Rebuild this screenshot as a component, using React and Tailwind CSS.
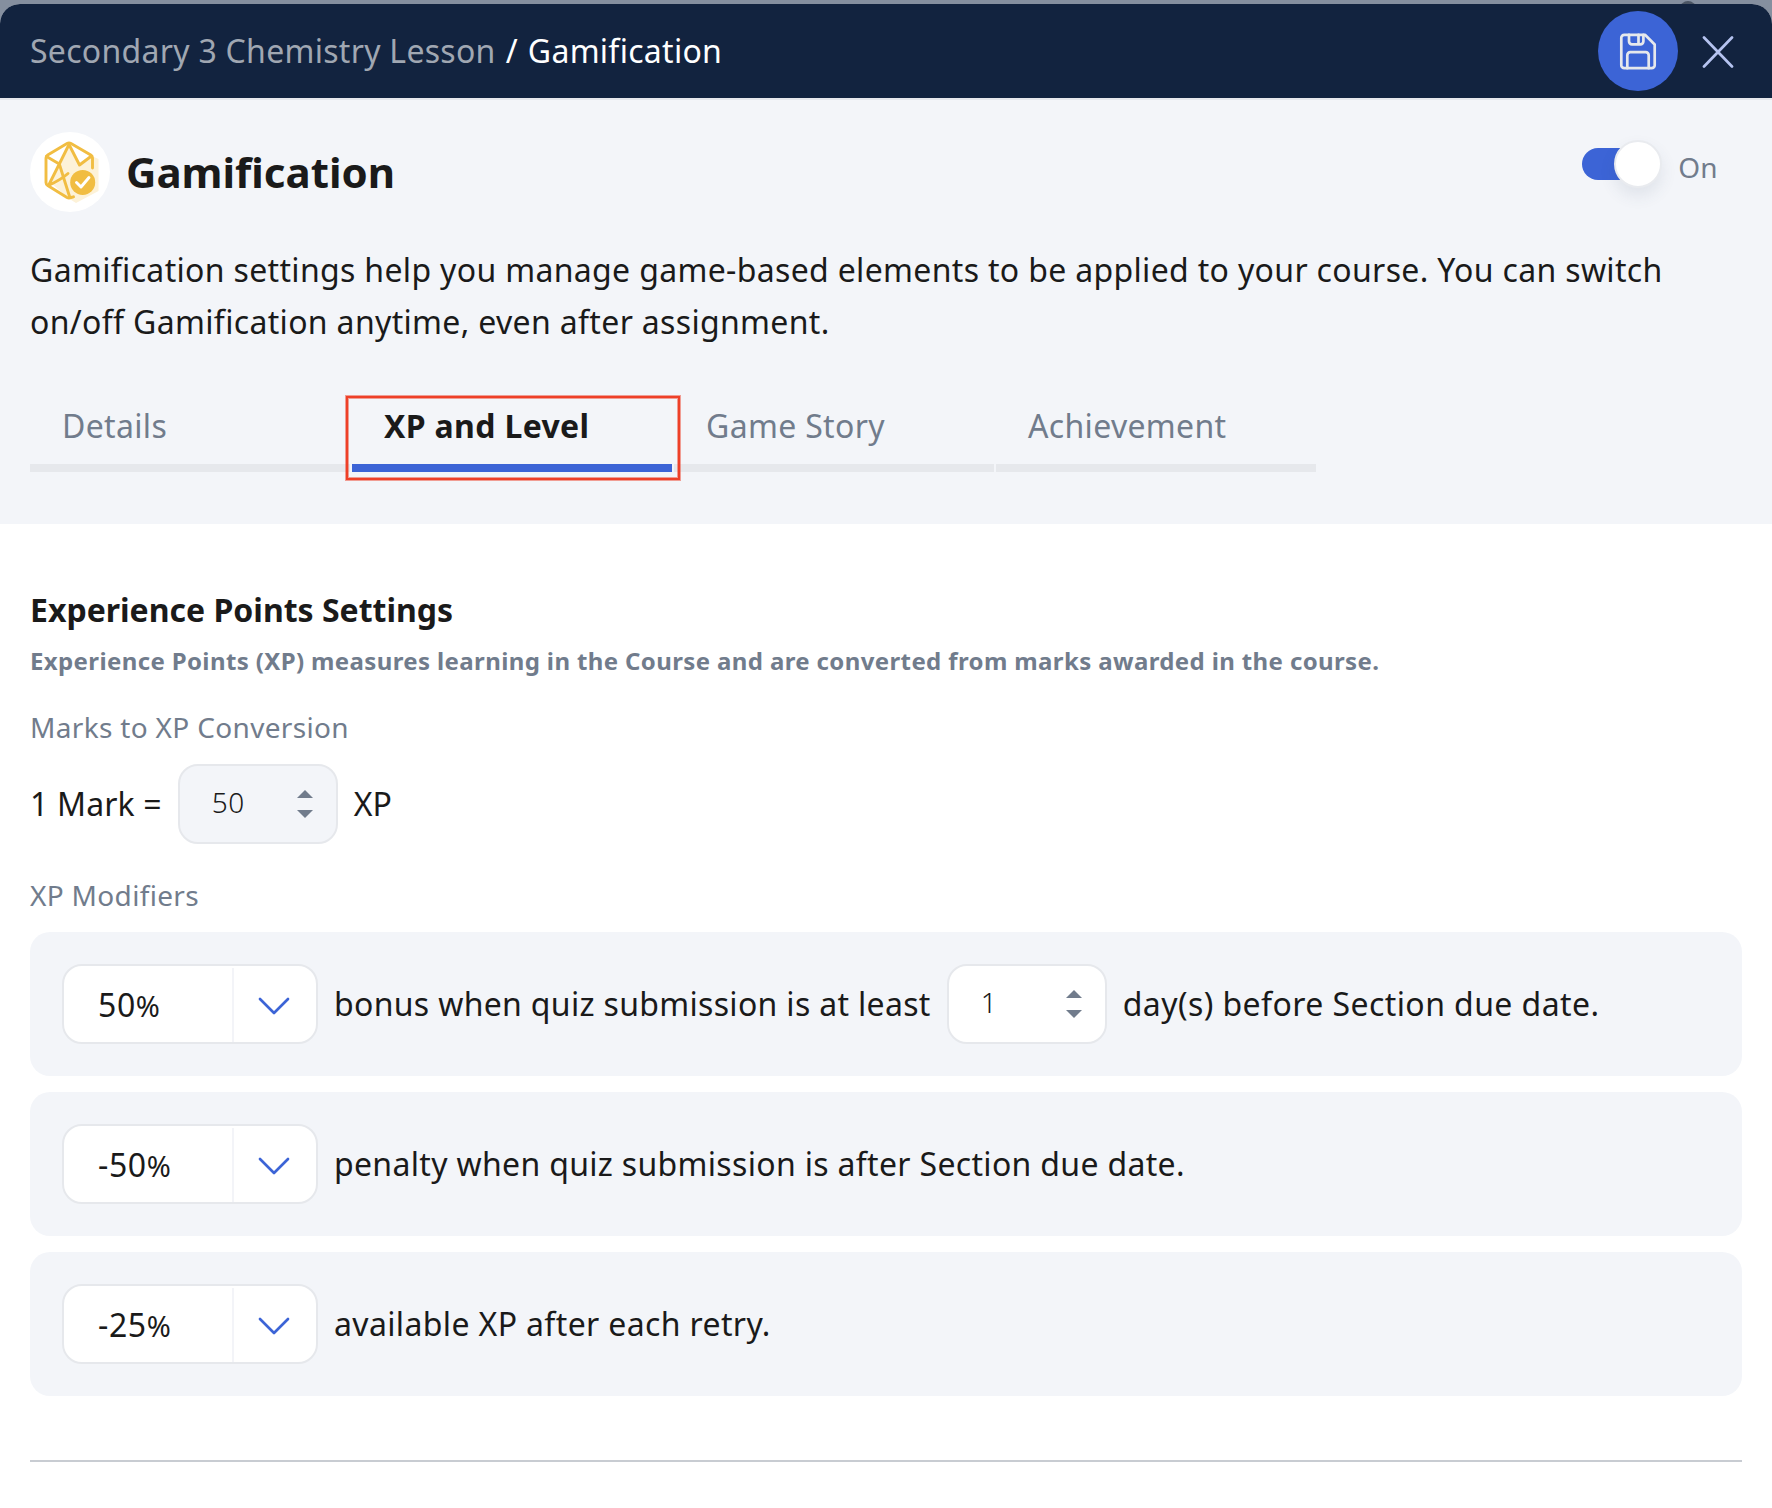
import React from "react";

const TABS = ["Details", "XP and Level", "Game Story", "Achievement"];

function SaveIcon() {
  return (
    <svg width="38" height="38" viewBox="0 0 38 38" fill="none" stroke="#e6e8ec" strokeWidth="2.7" strokeLinejoin="round" strokeLinecap="round">
      <path d="M5.300 2.800H26L35.700 12.500V33.200a3 3 0 0 1-3 3H5.300a3 3 0 0 1-3-3V5.800a3 3 0 0 1 3-3Z" />
      <path d="M10 2.800V9.300a3 3 0 0 0 3 3H21.400a3 3 0 0 0 3-3V2.800M19.500 2.800V11.500" />
      <path d="M8.300 36.200V23.200a3 3 0 0 1 3-3H26.700a3 3 0 0 1 3 3V36.200" />
    </svg>
  );
}

function CloseIcon() {
  return (
    <svg width="32" height="32" viewBox="0 0 32 32" fill="none" stroke="#b5c3f0" strokeWidth="2.7" strokeLinecap="round">
      <path d="M2 1.500 30 30.500M30 1.500 2 30.500" />
    </svg>
  );
}

function GameIcon() {
  return (
    <svg width="80" height="80" viewBox="0 0 80 80" fill="none" stroke="#f1bd42" strokeWidth="2.900" strokeLinejoin="round" strokeLinecap="round">
      <path d="M39 14 68.500 27V59L46 71 38 66 21 51 25 27Z" fill="#fdf2d8" stroke="none" />
      <path d="M39 12 62 25 49.500 33ZM39 12 29.300 32 16 24ZM16 24 29.300 32 18 53Z" fill="#fff" stroke="none" />
      <path d="M62.500 36V26a3.500 3.500 0 0 0-1.700-3L41 11.600a4 4 0 0 0-4 0L17.700 23A3.500 3.500 0 0 0 16 26V50.500a3.500 3.500 0 0 0 1.700 3L37 65.500a4 4 0 0 0 4 0L43.500 64.800" />
      <path d="M39 12.500 29.300 32 19 52.500M39 12.500 49.500 33 61.500 24M16.500 24.500 29.300 32 39.700 65M38 41.500C34 45 28 49 18.500 53.500" />
      <circle cx="52.700" cy="50.400" r="12.500" fill="#f1bd42" stroke="none" />
      <path d="M46.500 50.500 51 55 59 45.500" stroke="#fff" />
    </svg>
  );
}

function NumberField({ value, className }) {
  return (
    <div className={"flex h-20 w-40 shrink-0 items-center justify-between rounded-[20px] border-2 border-[#e6e8ec] pr-[23px] pl-8 " + className}>
      <span className="pb-1 text-[28px] leading-10 font-light">{value}</span>
      <svg width="16" height="28" viewBox="0 0 16 28" fill="#717c8c">
        <path d="M8 0 16 8H0ZM8 28 16 20H0Z" />
      </svg>
    </div>
  );
}

function PercentSelect({ value }) {
  return (
    <div className="flex h-20 w-64 shrink-0 overflow-hidden rounded-[20px] border-2 border-[#e6e8ec] bg-white">
      <div className="flex w-[168px] items-baseline pt-[13px] pl-[34px] tracking-[0.6px]">
        {value}
        <span className="text-[29px]">%</span>
      </div>
      <div className="mt-0.5 flex flex-1 items-center justify-center border-l-2 border-[#f3f4f8] pr-0.5">
        <svg className="mt-px" width="34" height="20" viewBox="0 0 34 20" fill="none" stroke="#3c64d6" strokeWidth="2.700" strokeLinecap="round" strokeLinejoin="round">
          <path d="M3 3 17 17 31 3" />
        </svg>
      </div>
    </div>
  );
}

function ModifierRow({ value, children }) {
  return (
    <div className="flex h-36 items-center gap-4 rounded-[20px] bg-[#f3f5f9] px-8">
      <PercentSelect value={value} />
      {children}
    </div>
  );
}

export default function App() {
  return (
    <div className="relative h-[1508px] w-[1772px] overflow-hidden bg-[#858f9f] pt-1 font-['Noto_Sans',sans-serif] text-[32px] leading-[52px] tracking-[0.33px] text-[#1a1a1a]">
      <div className="absolute top-px left-[1680px] h-4 w-4 rounded-full bg-[#4b5564]" />
      <div className="relative h-full overflow-hidden rounded-t-[20px] bg-white">
        <header className="flex h-24 items-center border-b-2 border-[#e6e8ec] bg-[#12233f] pr-[38px] pl-[30px]">
          <div className="flex flex-1 gap-2.5 tracking-[0.28px] text-white">
            <span className="text-[#a0a7b2]">Secondary 3 Chemistry Lesson</span>
            <span>/</span>
            <span>Gamification</span>
          </div>
          <button className="mr-6 flex size-20 items-center justify-center rounded-full bg-[#3c64d6]"><SaveIcon /></button>
          <button className="pt-0.5"><CloseIcon /></button>
        </header>

        <section className="h-[424px] bg-[#f3f5f9] px-[30px] pt-8">
          <div className="flex h-20 items-center">
            <div className="mr-4 size-20 rounded-full bg-white"><GameIcon /></div>
            <h1 className="flex-1 text-[42px] font-bold tracking-normal">Gamification</h1>
            <div className="mr-4 mb-4 flex h-8 w-20 items-center justify-end rounded-full bg-[linear-gradient(90deg,#3c64d6_60%,transparent_60%)]">
              <div className="size-12 shrink-0 rounded-full border-2 border-[#e9ebef] bg-white shadow-[0_8px_16px_rgba(60,80,110,0.1)]" />
            </div>
            <span className="mr-6 mb-2.5 text-[28px] text-[#717c8c]">On</span>
          </div>
          <p className="mt-8">
            Gamification settings help you manage game-based elements to be applied to your course. You can switch on/off Gamification anytime, even after assignment.
          </p>
          <nav className="mt-[52px] flex gap-0.5">
            {TABS.map((tab) => (
              <div
                key={tab}
                className={
                  tab === "XP and Level"
                    ? "relative h-[72px] w-80 border-b-8 border-[#3c64d6] pl-8 font-bold"
                    : "h-[72px] w-80 border-b-8 border-[#e6e8ec] pl-8 text-[#717c8c]"
                }
              >
                {tab}
                {tab === "XP and Level" && (
                  <div className="absolute -top-1 -left-1.5 h-[84px] w-[334px] border-2 border-[#ee4028] shadow-[0_0_0_1px_rgba(238,70,48,0.5),inset_0_0_0_1px_rgba(238,70,48,0.5)]" />
                )}
              </div>
            ))}
          </nav>
        </section>

        <main className="px-[30px] pt-[60px]">
          <h2 className="font-bold tracking-normal">Experience Points Settings</h2>
          <p className="mt-px text-[24px] leading-[48px] font-bold tracking-[0.375px] text-[#717c8c]">
            Experience Points (XP) measures learning in the Course and are converted from marks awarded in the course.
          </p>
          <div className="mt-[22px] text-[28px] leading-10 text-[#717c8c]">Marks to XP Conversion</div>
          <div className="mt-[17px] flex h-20 items-center gap-4">
            <span className="tracking-[0.16px]">1 Mark =</span>
            <NumberField value="50" className="bg-[#f3f5f9]" />
            <span className="tracking-normal">XP</span>
          </div>
          <div className="mt-[31px] text-[28px] leading-10 text-[#717c8c]">XP Modifiers</div>
          <div className="mt-[17px] flex flex-col gap-4">
            <ModifierRow value="50">
              <span className="tracking-[0.32px]">bonus when quiz submission is at least</span>
              <NumberField value="1" className="bg-white" />
              <span className="tracking-[0.42px]">day(s) before Section due date.</span>
            </ModifierRow>
            <ModifierRow value="-50">
              <span className="tracking-[0.32px]">penalty when quiz submission is after Section due date.</span>
            </ModifierRow>
            <ModifierRow value="-25">
              <span className="tracking-[0.36px]">available XP after each retry.</span>
            </ModifierRow>
          </div>
          <hr className="mt-16 border-t-2 border-[#c8ccd2]" />
        </main>
      </div>
    </div>
  );
}
